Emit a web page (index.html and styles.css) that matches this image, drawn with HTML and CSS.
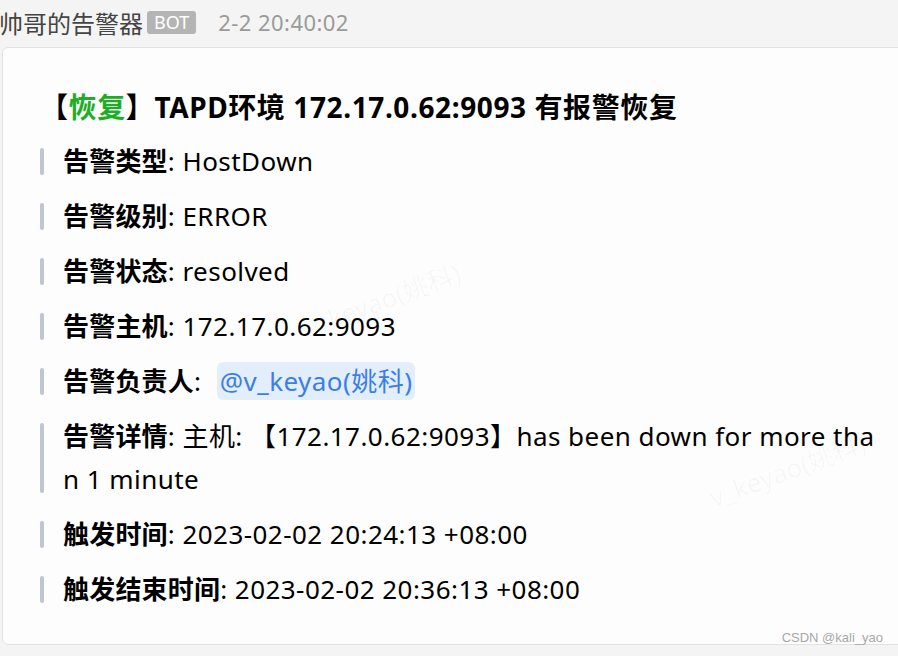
FILE: index.html
```html
<!DOCTYPE html>
<html lang="zh-CN">
<head>
<meta charset="utf-8">
<title>帅哥的告警器</title>
<link rel="stylesheet" href="styles.css">
</head>
<body>
<div class="page">
  <div class="header">
    <span class="name">帅哥的告警器</span>
    <span class="bot">BOT</span>
    <span class="time">2-2 20:40:02</span>
  </div>
  <div class="card">
    <div class="title">【<span class="green">恢复</span>】TAPD环境 172.17.0.62:9093 有报警恢复</div>
    <div class="rows">
      <div class="row"><div class="bar"></div><div class="text"><b>告警类型</b>: HostDown</div></div>
      <div class="row"><div class="bar"></div><div class="text"><b>告警级别</b>: ERROR</div></div>
      <div class="row"><div class="bar"></div><div class="text"><b>告警状态</b>: resolved</div></div>
      <div class="row"><div class="bar"></div><div class="text"><b>告警主机</b>: 172.17.0.62:9093</div></div>
      <div class="row"><div class="bar"></div><div class="text"><b>告警负责人</b>: <span class="mention">@v_keyao(姚科)</span></div></div>
      <div class="row"><div class="bar"></div><div class="text"><b>告警详情</b>: 主机: 【172.17.0.62:9093】has been down for more than 1 minute</div></div>
      <div class="row"><div class="bar"></div><div class="text"><b>触发时间</b>: 2023-02-02 20:24:13 +08:00</div></div>
      <div class="row"><div class="bar"></div><div class="text"><b>触发结束时间</b>: 2023-02-02 20:36:13 +08:00</div></div>
    </div>
  </div>
  <span class="wm wm1">v_keyao(姚科)</span>
  <span class="wm wm2">v_keyao(姚科)</span>
  <span class="csdn">CSDN @kali_yao</span>
</div>
</body>
</html>
```

FILE: styles.css
```css
html, body {
  margin: 0;
  padding: 0;
  background: #f4f4f4;
  overflow: hidden;
}
.page {
  position: relative;
  width: 898px;
  height: 656px;
  overflow: hidden;
  font-family: "Noto Sans", "Noto Sans CJK SC", sans-serif;
}
.header {
  height: 44px;
  display: flex;
  align-items: center;
  white-space: nowrap;
}
.name {
  margin-left: -1px;
  font-size: 24px;
  color: #444;
  font-family: "Noto Sans CJK SC", sans-serif;
}
.bot {
  margin-left: 4px;
  background: #b4b4b4;
  color: #fff;
  font-size: 18px;
  line-height: 23px;
  height: 23px;
  padding: 0 7px;
  border-radius: 3px;
}
.time {
  margin-left: 22px;
  font-size: 22px;
  letter-spacing: 0.45px;
  color: #9a9a9a;
}
.card {
  margin-top: 3px;
  margin-left: 2px;
  width: 838px;
  padding: 40px 40px 33px 37px;
  background: #fdfdfd;
  border: 1px solid #e2e2e2;
  border-radius: 6px;
  color: #000;
}
.title {
  font-size: 28px;
  font-weight: 700;
  line-height: 38px;
  letter-spacing: 0.6px;
  white-space: nowrap;
}
.green {
  color: #1fad28;
}
.rows {
  margin-top: 14px;
  display: flex;
  flex-direction: column;
  gap: 12px;
}
.row {
  display: flex;
}
.bar {
  flex: none;
  width: 4px;
  margin: 8px 19px 8px 0;
  background: #bfc5d1;
  border-radius: 2px;
}
.text {
  flex: 1;
  font-size: 26px;
  line-height: 43px;
  letter-spacing: 0.45px;
  word-break: break-all;
}
.text b {
  font-weight: 700;
  letter-spacing: 0.2px;
}
.mention {
  display: inline-block;
  margin-left: 8px;
  padding: 0 3px;
  line-height: 38px;
  background: #e3eefd;
  color: #3b7ee6;
  border-radius: 6px;
}
.wm {
  position: absolute;
  font-size: 26px;
  color: rgba(0, 0, 0, 0.03);
  transform: rotate(-20deg);
  white-space: nowrap;
  pointer-events: none;
}
.wm1 { left: 300px; top: 280px; }
.wm2 { left: 705px; top: 450px; }
.csdn {
  position: absolute;
  right: 15px;
  top: 630px;
  font-family: "Liberation Sans", sans-serif;
  font-size: 13px;
  color: #a8a8a8;
}
```
